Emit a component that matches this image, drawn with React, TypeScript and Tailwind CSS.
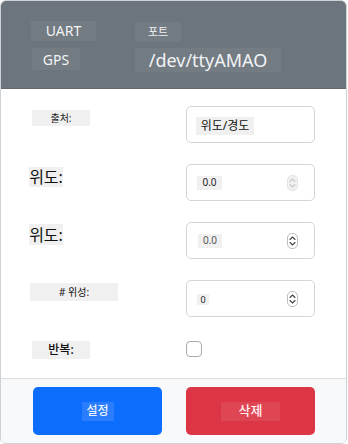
import React from "react";

const font = { fontFamily: '"Noto Sans", "Noto Sans CJK KR", sans-serif' };

function Spinner({ faded }: { faded?: boolean }) {
  return (
    <div
      className={
        "w-[11px] h-[16px] rounded-[5px] border flex items-center justify-center " +
        (faded ? "border-[#e4e4e4] bg-[#f1f1f1]" : "border-[#bdbdbd] bg-white")
      }
    >
      <svg width="7" height="12" viewBox="0 0 7 12" fill="none">
        <path
          d="M1 4.5 L3.5 2 L6 4.5"
          stroke={faded ? "#c8c8c8" : "#444"}
          strokeWidth="1.1"
          strokeLinecap="round"
          strokeLinejoin="round"
        />
        <path
          d="M1 7.5 L3.5 10 L6 7.5"
          stroke={faded ? "#c8c8c8" : "#444"}
          strokeWidth="1.1"
          strokeLinecap="round"
          strokeLinejoin="round"
        />
      </svg>
    </div>
  );
}

export default function App() {
  return (
    <div className="w-[348px] h-[444px] bg-white" style={font}>
      <div className="w-[347px] h-[444px] border border-[#cfd2d5] rounded-[6px] overflow-hidden flex flex-col">
        {/* Header */}
        <div className="h-[88px] bg-[#6c757d] border-b border-[#62696f] pt-[20px] pl-[30px] flex flex-col gap-[6px] shrink-0">
          <div className="flex items-start">
            <div className="w-[104px]">
              <div className="w-[65px] h-[20px] bg-[#737b83] text-[#f1f3f5] text-[14px] leading-[20px] flex items-center justify-center whitespace-nowrap">
                UART
              </div>
            </div>
            <div className="w-[46px] h-[20px] mt-[1px] bg-[#737b83] text-[#f1f3f5] text-[11px] leading-[20px] flex items-center justify-center whitespace-nowrap">
              포트
            </div>
          </div>
          <div className="flex items-start">
            <div className="w-[104px]">
              <div className="w-[48px] h-[22px] ml-[1px] bg-[#737b83] text-[#f1f3f5] text-[14px] flex items-center justify-center whitespace-nowrap">
                GPS
              </div>
            </div>
            <div className="w-[146px] h-[24px] bg-[#737b83] text-[#f1f3f5] text-[18px] flex items-center justify-center whitespace-nowrap">
              /dev/ttyAMAO
            </div>
          </div>
        </div>

        {/* Body */}
        <div className="flex-1 flex flex-col pt-[17px] gap-[21px]">
          {/* Row 1 */}
          <div className="flex items-start h-[37px]">
            <div className="w-[185px] pl-[31px] pt-[4px]">
              <div className="w-[58px] h-[16px] bg-[#f0f0f0] text-[10px] text-[#222] flex items-center justify-center whitespace-nowrap">
                출처:
              </div>
            </div>
            <div className="w-[129px] h-[37px] border border-[#d5d5d5] rounded-[5px] pl-[9px] pt-[10px]">
              <div className="w-[58px] h-[18px] bg-[#f0f0f0] text-[12px] text-[#111] flex items-center justify-center whitespace-nowrap">
                위도/경도
              </div>
            </div>
          </div>

          {/* Row 2 */}
          <div className="flex items-start h-[37px]">
            <div className="w-[185px] pl-[28px] pt-[3px]">
              <div className="w-[34px] h-[20px] bg-[#f0f0f0] text-[16px] leading-[20px] text-[#111] flex items-center justify-center whitespace-nowrap">
                위도:
              </div>
            </div>
            <div className="w-[129px] h-[37px] border border-[#d5d5d5] rounded-[5px] pl-[10px] pr-[16px] flex items-center justify-between">
              <div className="w-[25px] h-[14px] bg-[#f0f0f0] text-[10px] text-[#222] flex items-center justify-center whitespace-nowrap">
                0.0
              </div>
              <Spinner faded />
            </div>
          </div>

          {/* Row 3 */}
          <div className="flex items-start h-[37px]">
            <div className="w-[185px] pl-[28px] pt-[2px]">
              <div className="w-[34px] h-[21px] bg-[#f0f0f0] text-[16px] leading-[20px] text-[#111] flex items-center justify-center whitespace-nowrap">
                위도:
              </div>
            </div>
            <div className="w-[129px] h-[37px] border border-[#d5d5d5] rounded-[5px] pl-[11px] pr-[16px] flex items-center justify-between">
              <div className="w-[24px] h-[14px] bg-[#f0f0f0] text-[10px] text-[#555] flex items-center justify-center whitespace-nowrap">
                0.0
              </div>
              <Spinner />
            </div>
          </div>

          {/* Row 4 */}
          <div className="flex items-start h-[37px]">
            <div className="w-[185px] pl-[29px] pt-[3px]">
              <div className="w-[88px] h-[18px] bg-[#f0f0f0] text-[10px] text-[#111] flex items-center justify-center whitespace-nowrap">
                # 위성:
              </div>
            </div>
            <div className="w-[129px] h-[37px] border border-[#d5d5d5] rounded-[5px] pl-[10px] pr-[16px] flex items-center justify-between">
              <div className="w-[12px] h-[11px] mt-[2px] bg-[#f0f0f0] text-[9px] text-[#222] flex items-center justify-center whitespace-nowrap">
                0
              </div>
              <Spinner />
            </div>
          </div>

          {/* Row 5 */}
          <div className="flex items-start h-[18px] mt-[3px]">
            <div className="w-[185px] pl-[31px]">
              <div className="w-[58px] h-[18px] bg-[#f0f0f0] text-[12px] font-medium text-[#111] flex items-center justify-center whitespace-nowrap">
                반복:
              </div>
            </div>
            <div className="w-[16px] h-[16px] border border-[#aaaaaa] rounded-[4px] bg-white" />
          </div>
        </div>

        {/* Footer */}
        <div className="h-[65px] shrink-0 bg-[#f8f9fa] border-t border-[#dcdcdc] pt-[8px] pl-[32px] flex gap-[24px]">
          <div className="w-[129px] h-[48px] rounded-[5px] bg-[#0d6efd] flex items-center justify-center">
            <div className="w-[32px] h-[19px] bg-[#2a7efd] text-[#eef4ff] text-[12px] font-medium flex items-center justify-center whitespace-nowrap">
              설정
            </div>
          </div>
          <div className="w-[129px] h-[48px] rounded-[5px] bg-[#dc3545] flex items-center justify-center">
            <div className="w-[59px] h-[19px] bg-[#df4654] text-[#fff1f2] text-[13px] font-medium flex items-center justify-center whitespace-nowrap">
              삭제
            </div>
          </div>
        </div>
      </div>
    </div>
  );
}
